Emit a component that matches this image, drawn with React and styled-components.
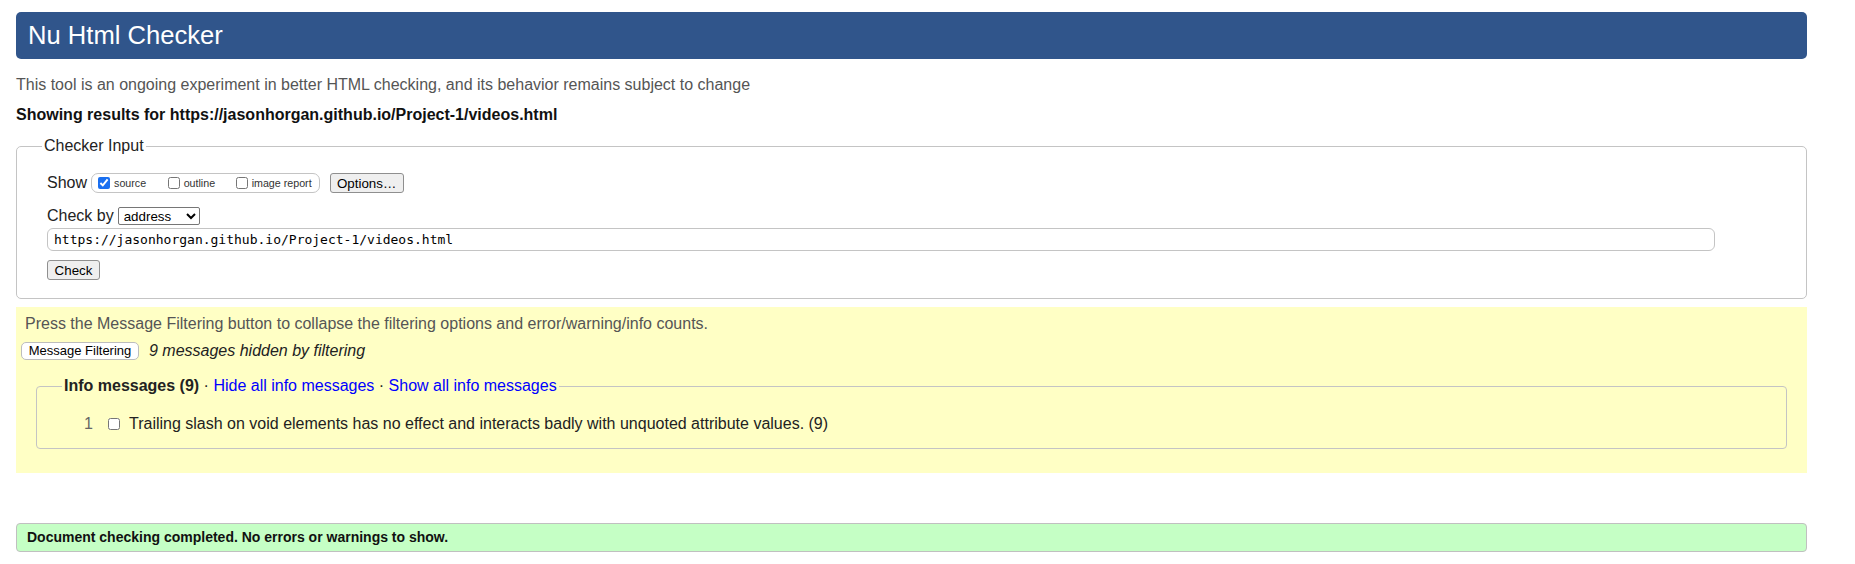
import React from "react";
import styled, { createGlobalStyle } from "styled-components";

const Global = createGlobalStyle`
    body {
        margin: 0;
        background: #fff;
        font-family: "Liberation Sans", Arial, sans-serif;
        color: #000;
    }
`;

export default function App() {
    return <Page>
        <Global/>
        <Header>Nu Html Checker</Header>
        <Intro>This tool is an ongoing experiment in better HTML checking, and its behavior remains subject to change</Intro>
        <Showing>Showing results for https://jasonhorgan.github.io/Project-1/videos.html</Showing>

        <InputSet>
            <InputLegend>Checker Input</InputLegend>
            <ShowRow>
                <span>Show</span>
                <Group>
                    <Opt w={69.6}><Box type="checkbox" defaultChecked/>source</Opt>
                    <Opt w={68}><Box type="checkbox"/>outline</Opt>
                    <Opt><Box type="checkbox"/>image report</Opt>
                </Group>
                <Btn>Options…</Btn>
            </ShowRow>
            <ByRow>
                <span>Check by</span>
                <Select defaultValue="address">
                    <option value="address">address</option>
                    <option value="file">file upload</option>
                    <option value="text">text input</option>
                </Select>
            </ByRow>
            <Url defaultValue="https://jasonhorgan.github.io/Project-1/videos.html"/>
            <CheckBtn>Check</CheckBtn>
        </InputSet>

        <Filtering>
            <Note>Press the Message Filtering button to collapse the filtering options and error/warning/info counts.</Note>
            <FilterRow>
                <SmallBtn>Message Filtering</SmallBtn>
                <Hidden>9 messages hidden by filtering</Hidden>
            </FilterRow>
            <InfoSet>
                <InfoLegend>
                    <b>Info messages (9)</b> · <A href="#">Hide all info messages</A> · <A href="#">Show all info messages</A>
                </InfoLegend>
                <MsgRow>
                    <Num>1</Num>
                    <MsgBox type="checkbox"/>
                    <span>Trailing slash on void elements has no effect and interacts badly with unquoted attribute values. (9)</span>
                </MsgRow>
            </InfoSet>
        </Filtering>

        <Done>Document checking completed. No errors or warnings to show.</Done>
    </Page>
}

const Page = styled.div`
    padding: 12px 48px 12px 16px;
`

const Header = styled.h1`
    margin: 0;
    height: 47px;
    line-height: 46px;
    padding-left: 12px;
    background-color: #30558b;
    color: #fff;
    font-size: 25.6px;
    font-weight: normal;
    border-radius: 5px;
`

const Intro = styled.p`
    margin: 17px 0 0;
    font-size: 16px;
    line-height: 18px;
    color: #555;
`

const Showing = styled.p`
    margin: 12px 0 0;
    font-size: 16px;
    line-height: 18px;
    font-weight: bold;
    color: #111;
`

const InputSet = styled.fieldset`
    margin: 13px 0 0;
    padding: 0 30px 18px;
    border: 1px solid #c4c4c4;
    border-radius: 5px;
`

const InputLegend = styled.legend`
    margin-left: -5px;
    padding: 0 2px;
    font-size: 16px;
    line-height: 18px;
    color: #222;
`

const ShowRow = styled.div`
    display: flex;
    align-items: center;
    height: 20px;
    margin-top: 18px;
    font-size: 16px;
    color: #222;
`

const Group = styled.div`
    display: flex;
    align-items: center;
    box-sizing: border-box;
    height: 20px;
    margin-left: 4px;
    padding: 0 7px 0 6px;
    border: 1px solid #c4c4c4;
    border-radius: 7px;
`

const Opt = styled.label`
    display: flex;
    align-items: center;
    width: ${p => p.w ? p.w + "px" : "auto"};
    font-size: 10.7px;
    color: #333;
`

const Box = styled.input`
    width: 12px;
    height: 12px;
    margin: 0 4px 0 0;
    accent-color: #1a6ff0;
`

const Btn = styled.button`
    margin-left: 10px;
    box-sizing: border-box;
    width: 74px;
    height: 20px;
    padding: 0;
    font-family: "Liberation Sans", Arial, sans-serif;
    font-size: 13.333px;
    color: #000;
    background: #efefef;
    border: 1px solid #8f8f8f;
    border-radius: 3px;
`

const ByRow = styled.div`
    display: flex;
    align-items: center;
    height: 20px;
    margin-top: 13px;
    font-size: 16px;
    color: #222;
`

const Select = styled.select`
    margin-left: 4px;
    box-sizing: border-box;
    width: 82px;
    height: 18px;
    padding: 0 1px;
    font-family: "Liberation Sans", Arial, sans-serif;
    font-size: 13.333px;
    color: #000;
    background: #fff;
    border: 1px solid #767676;
    border-radius: 2px;
`

const Url = styled.input`
    display: block;
    box-sizing: border-box;
    margin-top: 2px;
    width: 1668px;
    height: 23px;
    padding: 0 6px;
    font-family: "DejaVu Sans Mono", "Liberation Mono", monospace;
    font-size: 13px;
    color: #000;
    border: 1px solid #c4c4c4;
    border-radius: 6px;
    outline: none;
`

const CheckBtn = styled(Btn)`
    display: block;
    width: 53px;
    margin: 9px 0 0;
`

const Filtering = styled.div`
    margin-top: 8px;
    padding: 8px 20px 24px 9px;
    background-color: #ffffc5;
`

const Note = styled.p`
    margin: 0;
    font-size: 16px;
    line-height: 18px;
    color: #555;
`

const FilterRow = styled.div`
    display: flex;
    align-items: center;
    height: 19px;
    margin: 8px 0 0 -4px;
`

const SmallBtn = styled.button`
    box-sizing: border-box;
    width: 118px;
    height: 18px;
    padding: 0;
    font-family: "Liberation Sans", Arial, sans-serif;
    font-size: 13px;
    color: #000;
    background: #fff;
    border: 1px solid #bdbdbd;
    border-radius: 5px;
`

const Hidden = styled.i`
    margin-left: 10px;
    font-size: 16px;
    color: #222;
`

const InfoSet = styled.fieldset`
    margin: 17px 0 0 11px;
    padding: 0 27px 15px;
    border: 1px solid #c4c4c4;
    border-radius: 4px;
`

const InfoLegend = styled.legend`
    margin-left: -2px;
    padding: 0 2px;
    font-size: 16px;
    line-height: 18px;
    color: #222;
`

const A = styled.a`
    color: #0000ff;
    text-decoration: none;
`

const MsgRow = styled.div`
    display: flex;
    align-items: center;
    margin-top: 20px;
    font-size: 16px;
    line-height: 18px;
    color: #222;
`

const Num = styled.span`
    width: 29px;
    text-align: right;
    color: #666;
`

const MsgBox = styled.input`
    width: 12px;
    height: 12px;
    margin: 0 9px 0 15px;
`

const Done = styled.div`
    margin-top: 50px;
    height: 27px;
    line-height: 27px;
    padding-left: 10px;
    background-color: #c5ffc5;
    border: 1px solid #c0c0c0;
    border-radius: 4px;
    font-size: 14px;
    font-weight: bold;
    color: #111;
`
